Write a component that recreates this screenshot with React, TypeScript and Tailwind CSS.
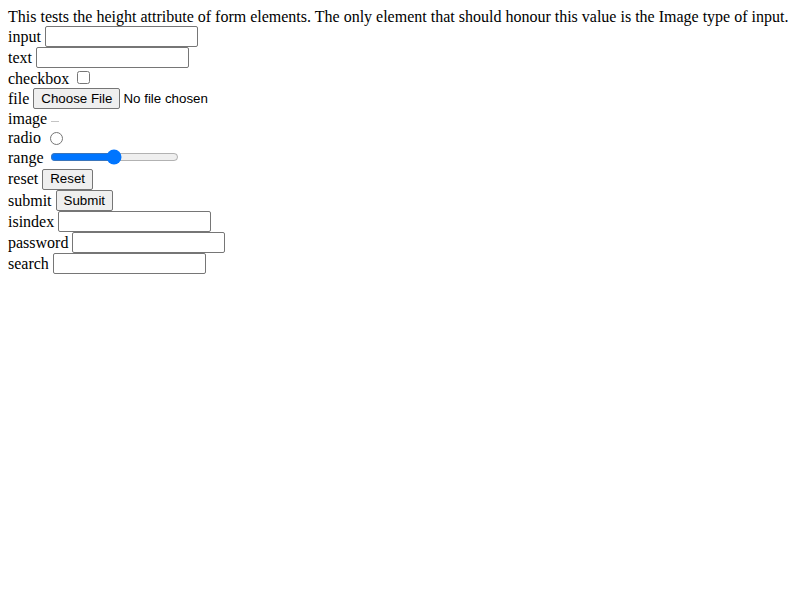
const field =
    "w-[153px] h-[21px] border border-[#767676] rounded-[2px] bg-white px-[2px] py-[1px] font-['Liberation_Sans',Arial,sans-serif] text-[13.333px] text-black";

const btn =
    "h-[21px] border border-[#767676] rounded-[2px] bg-[#efefef] px-[7px] py-[1px] font-['Liberation_Sans',Arial,sans-serif] text-[13.333px] leading-none text-black";

const App = () => {
    return (
        <div className="m-[8px] font-['Liberation_Serif','Times_New_Roman',serif] text-[16px] leading-[18px] text-black">
            <div className="h-[18px] whitespace-nowrap">
                This tests the height attribute of form elements. The only element that should honour this value is the Image type of input.
            </div>
            <div className="flex items-center gap-[4px] h-[21px]">
                <span>input</span>
                <input type="text" className={field} />
            </div>
            <div className="flex items-center gap-[4px] h-[21px]">
                <span>text</span>
                <input type="text" className={field} />
            </div>
            <div className="flex items-start gap-[4px] h-[20px]">
                <span className="mt-[2px]">checkbox</span>
                <input type="checkbox" className="m-[3px_3px_3px_4px] w-[13px] h-[13px]" />
            </div>
            <div className="flex items-center gap-[4px] h-[21px]">
                <span>file</span>
                <button className={btn}>Choose File</button>
                <span className="-ml-[1px] font-['Liberation_Sans',Arial,sans-serif] text-[13.333px]">No file chosen</span>
            </div>
            <div className="flex items-start gap-[4px] h-[20px]">
                <span className="mt-[1px]">image</span>
                <span className="mt-[12px] w-[8px] h-[1px] bg-[#c4c4c4]" />
            </div>
            <div className="flex items-start gap-[4px] h-[19px]">
                <span>radio</span>
                <input type="radio" className="m-[3px_3px_0_5px] w-[13px] h-[13px]" />
            </div>
            <div className="flex items-start gap-[4px] h-[20px]">
                <span className="mt-[1px]">range</span>
                <input type="range" defaultValue={50} className="m-[2px] mt-[1px] w-[129px] h-[16px]" />
            </div>
            <div className="flex items-center gap-[4px] h-[22px]">
                <span>reset</span>
                <button className={btn}>Reset</button>
            </div>
            <div className="flex items-center gap-[4px] h-[21px]">
                <span>submit</span>
                <button className={btn}>Submit</button>
            </div>
            <div className="flex items-center gap-[4px] h-[21px]">
                <span>isindex</span>
                <input type="text" className={field} />
            </div>
            <div className="flex items-center gap-[4px] h-[21px]">
                <span>password</span>
                <input type="password" className={field} />
            </div>
            <div className="flex items-center gap-[4px] h-[21px]">
                <span>search</span>
                <input type="search" className={field} />
            </div>
        </div>
    );
};

export default App;
